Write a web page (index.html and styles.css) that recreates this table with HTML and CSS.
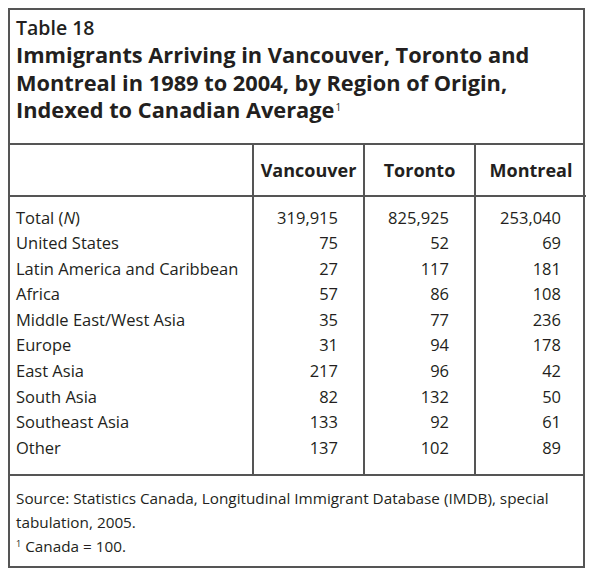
FILE: index.html
```html
<!DOCTYPE html>
<html>
<head>
<meta charset="utf-8">
<link rel="stylesheet" href="styles.css">
</head>
<body>
<div class="box">
  <div class="title-block">
    <div class="label">Table 18</div>
    <h1 class="title">Immigrants Arriving in Vancouver, Toronto and Montreal in 1989 to 2004, by Region of Origin, Indexed to Canadian Average<sup class="sup">1</sup></h1>
  </div>
  <table class="data">
    <colgroup>
      <col class="c-label"><col class="c-num"><col class="c-num"><col class="c-num">
    </colgroup>
    <thead>
      <tr><th></th><th>Vancouver</th><th>Toronto</th><th>Montreal</th></tr>
    </thead>
    <tbody>
      <tr class="first"><td>Total (<i>N</i>)</td><td>319,915</td><td>825,925</td><td>253,040</td></tr>
      <tr><td>United States</td><td>75</td><td>52</td><td>69</td></tr>
      <tr><td>Latin America and Caribbean</td><td>27</td><td>117</td><td>181</td></tr>
      <tr><td>Africa</td><td>57</td><td>86</td><td>108</td></tr>
      <tr><td>Middle East/West Asia</td><td>35</td><td>77</td><td>236</td></tr>
      <tr><td>Europe</td><td>31</td><td>94</td><td>178</td></tr>
      <tr><td>East Asia</td><td>217</td><td>96</td><td>42</td></tr>
      <tr><td>South Asia</td><td>82</td><td>132</td><td>50</td></tr>
      <tr><td>Southeast Asia</td><td>133</td><td>92</td><td>61</td></tr>
      <tr class="last"><td>Other</td><td>137</td><td>102</td><td>89</td></tr>
    </tbody>
  </table>
  <div class="notes">
    <p>Source: Statistics Canada, Longitudinal Immigrant Database (IMDB), special tabulation, 2005.</p>
    <p><span class="fn">1</span> Canada = 100.</p>
  </div>
</div>
</body>
</html>
```
FILE: styles.css
```css
html, body {
  margin: 0;
  padding: 0;
  background: #fff;
}
body {
  font-family: "Open Sans", "DejaVu Sans", sans-serif;
  color: #231f20;
}
.box {
  margin: 8px 0 0 8px;
  width: 577px;
  box-sizing: border-box;
  border: 2px solid #555;
}
.title-block {
  padding: 5px 6px 19px 6px;
  border-bottom: 2px solid #555;
}
.label {
  font-size: 19.5px;
  font-weight: 600;
  line-height: 26px;
}
.title {
  margin: 0;
  font-size: 21.8px;
  font-weight: 700;
  line-height: 27.5px;
}
.sup {
  display: inline-block;
  font-size: 10px;
  line-height: 10px;
  vertical-align: top;
  margin-top: 6px;
  margin-left: 1px;
  font-weight: 400;
}
.data {
  width: 100%;
  border-collapse: collapse;
  table-layout: fixed;
}
.c-label { width: 243px; }
.c-num { width: 111px; }
.data th {
  height: 50px;
  padding: 0;
  font-size: 18px;
  font-weight: 700;
  text-align: center;
  border-bottom: 2px solid #555;
}
.data th + th, .data td + td {
  border-left: 2px solid #555;
}
.data td {
  font-size: 16.5px;
  line-height: 25.6px;
  padding: 0 25px 0 6px;
  text-align: right;
  white-space: nowrap;
}
.data td:first-child {
  text-align: left;
}
.data tr.first td { padding-top: 8px; }
.data tr.last td { padding-bottom: 14px; }
.notes {
  border-top: 2px solid #555;
  padding: 10px 6px 8px 6px;
  font-size: 15.3px;
  line-height: 24px;
}
.notes p { margin: 0; }
.fn {
  display: inline-block;
  font-size: 9px;
  line-height: 9px;
  vertical-align: top;
  margin-top: 5px;
}
```
